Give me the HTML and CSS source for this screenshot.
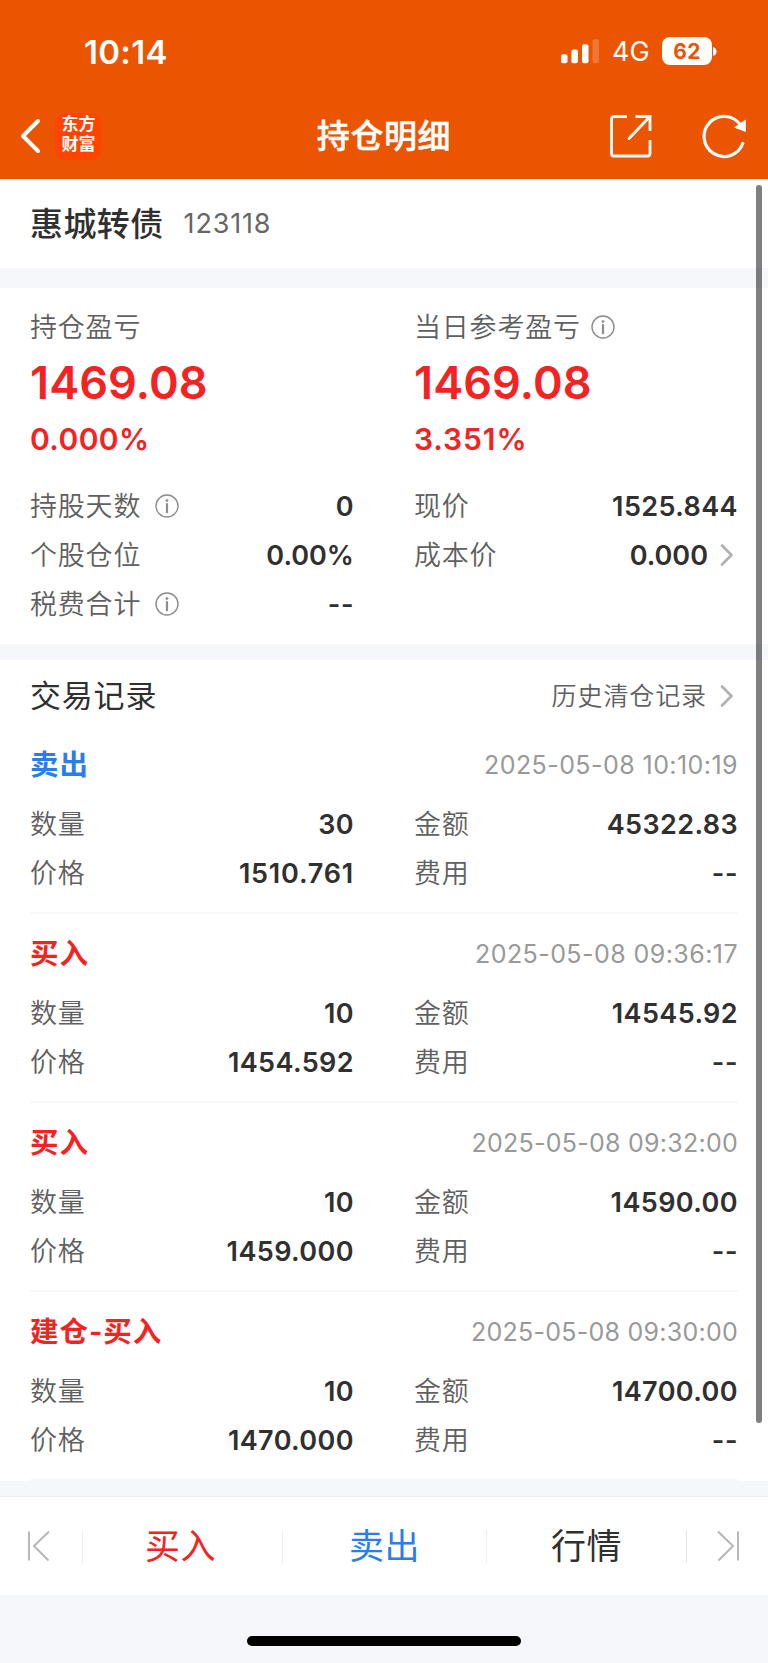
FILE: index.html
```html
<!DOCTYPE html>
<html lang="zh-CN">
<head>
<meta charset="utf-8">
<title>持仓明细</title>
<link rel="stylesheet" href="styles.css">
</head>
<body>
<svg class="defs" width="0" height="0" aria-hidden="true">
  <symbol id="info" viewBox="0 0 24 24"><circle cx="12" cy="12" r="11" fill="none" stroke="#8c8c8c" stroke-width="1.4"/><circle cx="12" cy="6.600" r="1.400" fill="#8c8c8c"/><path d="M12 10v8.200" stroke="#8c8c8c" stroke-width="2.200" stroke-linecap="round"/></symbol>
  <symbol id="chev" viewBox="0 0 14 24"><path d="M2 2.500L11.500 12L2 21.500" fill="none" stroke="#b0b0b0" stroke-width="2.600" stroke-linecap="round" stroke-linejoin="round"/></symbol>
</svg>
<div class="screen">
  <header class="top">
    <div class="status">
      <span class="clock">10:14</span>
      <div class="status-right">
        <svg width="39" height="25" viewBox="0 0 39 25" fill="#fff"><rect x="0" y="15.300" width="6.500" height="9" rx="2"/><rect x="10.400" y="10.500" width="6.500" height="13.800" rx="2"/><rect x="21" y="5.300" width="6.500" height="19" rx="2"/><rect x="31.500" y="0.300" width="6.500" height="24" rx="2" opacity=".2"/></svg>
        <span class="net">4G</span>
        <span class="battery">62</span>
        <svg class="cap" width="4" height="9" viewBox="0 0 4 9"><path d="M0 0Q3.600 1.200 3.600 4.500Q3.600 7.800 0 9Z" fill="#fff"/></svg>
      </div>
    </div>
    <nav class="nav">
      <div class="nav-left">
        <svg width="20" height="36" viewBox="0 0 20 36"><path d="M18 3L3 18L18 33" fill="none" stroke="#fff" stroke-width="4" stroke-linecap="round" stroke-linejoin="round"/></svg>
        <div class="logo"><span>东方</span><span>财富</span></div>
      </div>
      <h1>持仓明细</h1>
      <div class="nav-right">
        <svg width="44" height="46" viewBox="0 -2 44 46" fill="none" stroke="#fff" stroke-width="2.800"><path d="M18 1.500H5Q2.500 1.500 2.500 4V38.500Q2.500 41 5 41H38.500Q41 41 41 38.500V25"/><path d="M26.500 1.500H41V16"/><path d="M41 1.500L20 23.500" stroke-linecap="round"/></svg>
        <svg width="46" height="46" viewBox="0 0 46 46"><path d="M40.800 30.500A20 20 0 1 1 38.500 12" fill="none" stroke="#fff" stroke-width="3.200" stroke-linecap="round"/><path d="M43.800 6.500V19L32 14.500Z" fill="#fff"/></svg>
      </div>
    </nav>
  </header>
  <main>
    <section class="security"><h2>惠城转债</h2><span class="code">123118</span></section>
    <section class="position">
      <div class="cols">
        <div class="col">
          <div class="line"><span class="label">持仓盈亏</span></div>
          <div class="big">1469.08</div>
          <div class="pct">0.000%</div>
        </div>
        <div class="col">
          <div class="line"><span class="label">当日参考盈亏</span><svg class="info near"><use href="#info"/></svg></div>
          <div class="big">1469.08</div>
          <div class="pct wide">3.351%</div>
        </div>
      </div>
      <div class="cols">
        <div class="col">
          <div class="row"><span class="label">持股天数</span><svg class="info"><use href="#info"/></svg><b>0</b></div>
          <div class="row"><span class="label">个股仓位</span><b class="ratio">0.00%</b></div>
          <div class="row"><span class="label">税费合计</span><svg class="info"><use href="#info"/></svg><b class="dash">--</b></div>
        </div>
        <div class="col">
          <div class="row"><span class="label">现价</span><b>1525.844</b></div>
          <div class="row"><span class="label">成本价</span><b class="ratio">0.000</b><svg class="chev"><use href="#chev"/></svg></div>
        </div>
      </div>
    </section>
    <section class="records">
      <div class="records-head"><h3>交易记录</h3><span class="history">历史清仓记录</span><svg class="chev"><use href="#chev"/></svg></div>
      <article class="record">
        <div class="record-head"><span class="side sell">卖出</span><time>2025-05-08 10:10:19</time></div>
        <div class="cols">
          <div class="col"><div class="row"><span class="label">数量</span><b>30</b></div><div class="row"><span class="label">价格</span><b class="narrow">1510.761</b></div></div>
          <div class="col"><div class="row"><span class="label">金额</span><b>45322.83</b></div><div class="row"><span class="label">费用</span><b class="dash">--</b></div></div>
        </div>
      </article>
      <article class="record">
        <div class="record-head"><span class="side buy">买入</span><time>2025-05-08 09:36:17</time></div>
        <div class="cols">
          <div class="col"><div class="row"><span class="label">数量</span><b>10</b></div><div class="row"><span class="label">价格</span><b>1454.592</b></div></div>
          <div class="col"><div class="row"><span class="label">金额</span><b>14545.92</b></div><div class="row"><span class="label">费用</span><b class="dash">--</b></div></div>
        </div>
      </article>
      <article class="record">
        <div class="record-head"><span class="side buy">买入</span><time class="tight">2025-05-08 09:32:00</time></div>
        <div class="cols">
          <div class="col"><div class="row"><span class="label">数量</span><b>10</b></div><div class="row"><span class="label">价格</span><b>1459.000</b></div></div>
          <div class="col"><div class="row"><span class="label">金额</span><b>14590.00</b></div><div class="row"><span class="label">费用</span><b class="dash">--</b></div></div>
        </div>
      </article>
      <article class="record">
        <div class="record-head"><span class="side buy">建仓-买入</span><time class="tight">2025-05-08 09:30:00</time></div>
        <div class="cols">
          <div class="col"><div class="row"><span class="label">数量</span><b>10</b></div><div class="row"><span class="label">价格</span><b>1470.000</b></div></div>
          <div class="col"><div class="row"><span class="label">金额</span><b>14700.00</b></div><div class="row"><span class="label">费用</span><b class="dash">--</b></div></div>
        </div>
      </article>
    </section>
    <div class="scrollbar"></div>
  </main>
  <footer class="toolbar">
    <span class="step first"><svg width="24" height="32" viewBox="0 0 24 32" fill="none" stroke="#b5b5b5" stroke-width="1.900"><path d="M2 1.500V30.500M22 1.500L7 16L21.500 30.500"/></svg></span>
    <span class="action buy">买入</span>
    <span class="action sell">卖出</span>
    <span class="action">行情</span>
    <span class="step last"><svg width="24" height="32" viewBox="0 0 24 32" fill="none" stroke="#b5b5b5" stroke-width="1.900"><path d="M22 1.500V30.500M2 1.500L17 16L2.500 30.500"/></svg></span>
  </footer>
  <div class="home"><span></span></div>
</div>
</body>
</html>
```

FILE: styles.css
```css
* { box-sizing: border-box; }
body { margin: 0; background: #f5f7fa; color: #303030; font-family: Inter, "Noto Sans CJK SC", sans-serif; line-height: 40px; }
h1, h2, h3 { margin: 0; font-weight: 500; }
svg { display: block; flex: none; }
.defs { position: absolute; }
.screen { width: 768px; height: 1663px; display: flex; flex-direction: column; overflow: hidden; white-space: nowrap; }

.top { height: 179px; background: #eb5502; color: #fff; flex: none; }
.status { height: 93px; padding: 9px 51px 0 84px; display: flex; align-items: center; justify-content: space-between; }
.clock { font-size: 33px; font-weight: 600; letter-spacing: .3px; padding-top: 1px; }
.status-right { display: flex; align-items: center; }
.net { font-size: 27px; margin-left: 12px; width: 38px; padding-top: 2px; }
.battery { width: 50px; height: 28px; border-radius: 8px; background: #fff; color: #eb5502; font-size: 21px; font-weight: 700; line-height: 29px; text-align: center; letter-spacing: .3px; margin-left: 12px; }
.cap { margin-left: 1px; }
.nav { height: 86px; display: grid; grid-template-columns: 1fr auto 1fr; align-items: center; padding: 0 20px 0 20px; }
.nav-left { display: flex; align-items: center; gap: 15px; }
.logo { width: 47px; height: 47px; border-radius: 10px; background: #ff4400; display: flex; flex-direction: column; align-items: center; justify-content: center; gap: 3px; padding-bottom: 3px; font: 700 17px/17px Inter, "Noto Sans CJK SC", sans-serif; }
h1 { font-size: 33px; letter-spacing: .6px; -webkit-text-stroke: .5px #fff; }
.nav-right { display: flex; align-items: center; justify-content: flex-end; gap: 49px; }

main { position: relative; flex: none; height: 1302px; }
.security { height: 89px; background: #fff; padding: 0 30px; display: flex; align-items: center; gap: 20px; }
h2 { font-size: 33px; letter-spacing: .4px; }
.code { font-size: 27px; letter-spacing: .8px; color: #666; }
.position { margin-top: 20px; height: 356px; background: #fff; padding: 19px 30px 0; }
.cols { display: grid; grid-template-columns: 324px 324px; column-gap: 60px; }
.label { font-size: 27px; line-height: 40px; padding-top: 2px; letter-spacing: .8px; color: #606060; font-weight: 350; }
.line { height: 40px; display: flex; align-items: center; }
.big { height: 70px; line-height: 71px; font-size: 45px; font-weight: 600; letter-spacing: .1px; color: #f52222; }
.pct { height: 64px; line-height: 45px; font-size: 30px; font-weight: 600; letter-spacing: .4px; color: #f52222; }
.wide { letter-spacing: .9px; }
.row { height: 49px; display: flex; align-items: center; }
.row b { margin-left: auto; font-size: 27px; line-height: 40px; padding-top: 2px; font-weight: 600; letter-spacing: .4px; }
.row .ratio { letter-spacing: 0; }
.row .narrow { letter-spacing: .8px; }
.row .dash { letter-spacing: .5px; padding-top: 3px; }
.info { width: 24px; height: 24px; margin-left: 14px; }
.near { margin-left: 10px; }
.chev { width: 14px; height: 24px; margin-left: 12px; margin-right: 4px; }

.records { margin-top: 16px; height: 821px; background: #fff; padding: 0 30px; }
.records-head { height: 65px; padding-top: 6px; display: flex; align-items: center; }
h3 { font-size: 31px; letter-spacing: .8px; font-weight: 400; }
.history { margin-left: auto; margin-right: 1px; font-size: 25px; letter-spacing: .9px; color: #606060; font-weight: 350; }
.record { height: 189px; padding-top: 20px; border-bottom: 2px solid #f7f8fa; }
.record-head { height: 40px; margin-bottom: 14px; display: flex; align-items: center; justify-content: space-between; }
.side { font-size: 28.500px; font-weight: 700; letter-spacing: 1px; }
time { font-size: 25px; color: #999; letter-spacing: .44px; }
.tight { letter-spacing: .26px; }
.buy { color: #f52222; }
.sell { color: #2b7de9; }
.scrollbar { position: absolute; right: 6px; top: 6px; width: 6px; height: 1238px; border-radius: 3px; background: rgba(0,0,0,.5); }

.toolbar { margin-top: 15px; height: 99px; background: #fff; border-top: 1px solid #eceef1; display: grid; grid-template-columns: 82px 200px 204px 200px 82px; flex: none; align-items: center; }
.step { display: flex; padding-left: 27px; }
.action { text-align: center; font-size: 35px; letter-spacing: .6px; height: 33px; line-height: 33px; border-left: 1px solid #eee; }
.action.buy { padding-right: 4px; }
.toolbar .last { height: 33px; padding-left: 29px; border-left: 1px solid #e6e6e6; }
.home { height: 68px; flex: none; display: flex; justify-content: center; padding-top: 41px; }
.home span { width: 274px; height: 10px; border-radius: 5px; background: #000; }
```
